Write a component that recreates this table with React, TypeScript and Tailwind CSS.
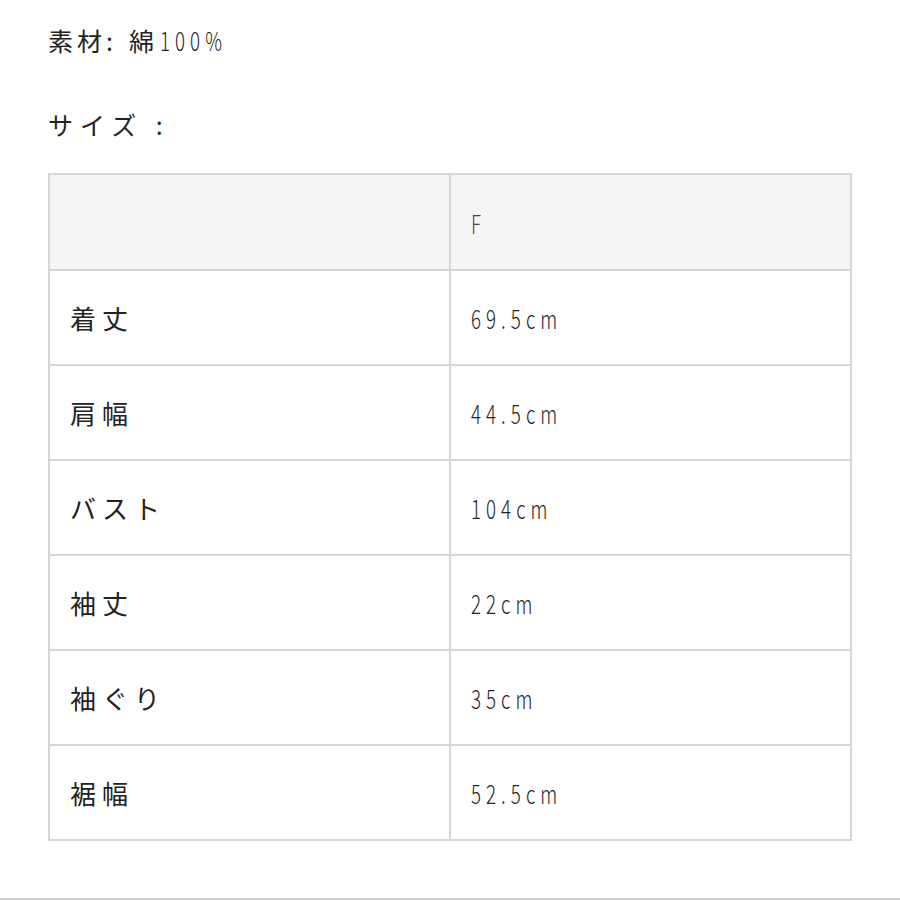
import React from 'react';

const FONT = "font-['Noto_Sans_CJK_JP',sans-serif]";

const rows = [
  { label: '着丈', value: '69.5cm' },
  { label: '肩幅', value: '44.5cm' },
  { label: 'バスト', value: '104cm' },
  { label: '袖丈', value: '22cm' },
  { label: '袖ぐり', value: '35cm' },
  { label: '裾幅', value: '52.5cm' },
];

// narrow latin text, the reference uses a condensed face
const Narrow = ({ children, className = '' }: { children: React.ReactNode; className?: string }) => (
  <span className={`inline-block origin-left scale-x-[0.72] ${className}`}>{children}</span>
);

export default function App() {
  return (
    <div className={`w-[900px] h-[900px] bg-white text-[#222] relative ${FONT}`}>
      <div className="px-12 pt-[24px]">
        <p className="text-[25px] leading-[32px] tracking-[4px] whitespace-nowrap">
          素材:<span className="inline-block ml-[12px]">綿</span>
          <Narrow className="ml-[2px] text-[26px] tracking-[7px] font-light">100%</Narrow>
        </p>
        <p className="mt-[52px] text-[25px] leading-[32px] tracking-[7px]">サイズ :</p>

        <table className="mt-[33px] w-[804px] border-collapse border-2 border-[#d6d6d6]">
          <tbody>
            <tr className="h-[96px] bg-[#f5f5f5]">
              <td className="w-[401px] border-2 border-[#d6d6d6]" />
              <td className="border-2 border-[#d6d6d6] pl-5 text-[#444]">
                <Narrow className="text-[26px] font-light">F</Narrow>
              </td>
            </tr>
            {rows.map((r, i) => (
              <tr key={i} className="h-[95px]">
                <td className="border-2 border-[#d6d6d6] pl-5 text-[26px] tracking-[6px]">{r.label}</td>
                <td className="border-2 border-[#d6d6d6] pl-5 text-[#222]">
                  <Narrow className="text-[26px] tracking-[7px] font-light">{r.value}</Narrow>
                </td>
              </tr>
            ))}
          </tbody>
        </table>
      </div>
      <div className="absolute left-0 right-0 bottom-0 h-[2px] bg-[#d0d0d0]" />
    </div>
  );
}
